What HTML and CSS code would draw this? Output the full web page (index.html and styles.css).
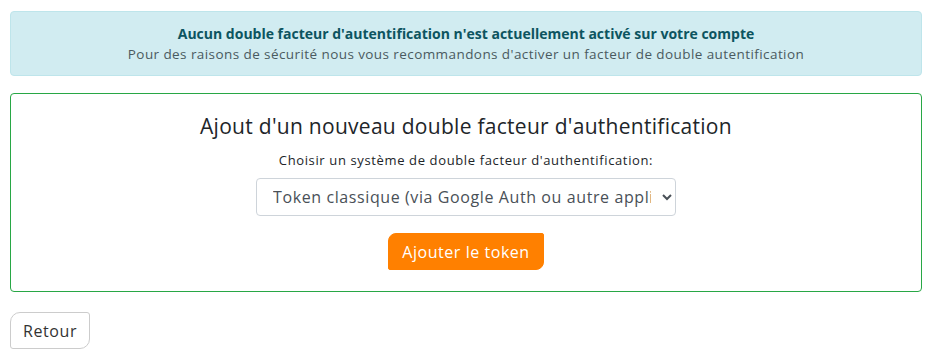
FILE: index.html
```html
<!DOCTYPE html>
<html lang="fr">
<head>
<meta charset="utf-8">
<title>Double facteur</title>
<link rel="stylesheet" href="styles.css">
</head>
<body>
<div class="page">
  <div class="alert">
    <div class="alert-title">Aucun double facteur d'autentification n'est actuellement activé sur votre compte</div>
    <div class="alert-text">Pour des raisons de sécurité nous vous recommandons d'activer un facteur de double autentification</div>
  </div>
  <div class="card">
    <h2 class="card-title">Ajout d'un nouveau double facteur d'authentification</h2>
    <label class="field-label" for="type">Choisir un système de double facteur d'authentification:</label>
    <select id="type" class="select">
      <option>Token classique (via Google Auth ou autre application)</option>
    </select>
    <button class="btn btn-orange" type="button">Ajouter le token</button>
  </div>
  <div class="actions">
    <button class="btn btn-back" type="button">Retour</button>
  </div>
</div>
</body>
</html>
```
FILE: styles.css
```css
html, body {
  margin: 0;
  padding: 0;
  background: #ffffff;
}
body {
  font-family: "Open Sans", "DejaVu Sans", sans-serif;
  color: #212529;
}
.page {
  padding: 11px 7px 0 10px;
}
.alert {
  background: #d1ecf1;
  border: 1px solid #bee5eb;
  border-radius: 4px;
  color: #0c5460;
  text-align: center;
  padding: 12px 12px 11px;
  line-height: 20px;
}
.alert-title {
  font-weight: 700;
  font-size: 14px;
}
.alert-text {
  font-size: 13.5px;
  letter-spacing: 0.42px;
  color: #4a5a60;
}
.card {
  margin-top: 17px;
  border: 1px solid #28a745;
  border-radius: 4px;
  padding: 20px 12px 21px;
  display: flex;
  flex-direction: column;
  align-items: center;
}
.card-title {
  margin: 0;
  font-weight: 400;
  font-size: 21px;
  letter-spacing: 0.28px;
  line-height: 24px;
  color: #212529;
}
.field-label {
  margin-top: 14px;
  font-size: 13px;
  letter-spacing: 0.63px;
  line-height: 16px;
  color: #212529;
}
.select {
  margin-top: 10px;
  width: 420px;
  height: 38px;
  border: 1px solid #ced4da;
  border-radius: 4px;
  background: #ffffff;
  color: #495057;
  font-family: "Open Sans", "DejaVu Sans", sans-serif;
  font-size: 16px;
  letter-spacing: 0.6px;
  padding: 0 8px 0 12px;
}
.btn {
  font-family: "Open Sans", "DejaVu Sans", sans-serif;
  font-size: 16px;
  line-height: 24px;
  cursor: pointer;
}
.btn-orange {
  margin-top: 17px;
  height: 37px;
  padding: 0 13px;
  letter-spacing: 0.55px;
  background: #ff8000;
  color: #ffffff;
  border: 1px solid #ff8000;
  border-radius: 8px 2px 8px 2px;
}
.actions {
  margin-top: 20px;
}
.btn-back {
  height: 37px;
  width: 80px;
  padding: 0;
  letter-spacing: 0.6px;
  background: #ffffff;
  color: #333333;
  border: 1px solid #cccccc;
  border-radius: 10px 3px 10px 3px;
}
```
